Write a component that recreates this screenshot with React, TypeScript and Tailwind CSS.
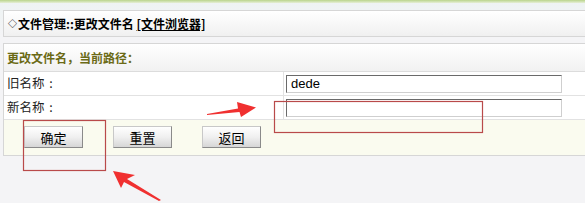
import React from 'react';

const cjk = { fontFamily: '"Noto Sans CJK SC", "Liberation Sans", sans-serif' };

const Btn: React.FC<{ label: string }> = ({ label }) => (
  <button
    type="button"
    className="h-[22px] w-[59px] border border-[#c8c8c8] border-r-[#8a8a8a] border-b-[#8a8a8a] bg-gradient-to-b from-white via-[#f0f0f0] to-[#d6d6d6] text-[13px] leading-none text-black"
  >
    {label}
  </button>
);

const Row: React.FC<{ label: string; value?: string }> = ({ label, value }) => (
  <div className="flex h-[24px] border-b border-[#e2e2e2] bg-white">
    <div className="flex w-[280px] items-center border-r border-[#e2e2e2] pl-[3px] text-[12.5px] text-[#222]">
      {label}
      <span className="inline-block w-[13px] text-center">:</span>
    </div>
    <div className="flex items-center pl-[2px]">
      <input
        readOnly
        defaultValue={value}
        className="h-[18px] w-[276px] border border-[#cfcfcf] border-t-[#6a6a6a] border-l-[#6a6a6a] bg-white px-[4px] text-[13px] text-black outline-none"
        style={{ fontFamily: '"Liberation Sans", sans-serif' }}
      />
    </div>
  </div>
);

export default function App() {
  return (
    <div className="relative h-[203px] w-[585px] overflow-hidden bg-[#f4f4f6]" style={cjk}>
      <div className="h-[3px] bg-gradient-to-b from-[#b9d48a] to-[#e6efd6]" />
      <div className="bg-gradient-to-b from-[#eef3f3] to-[#f4f4f6] pt-[7px] pl-[3px]">
        <div className="flex h-[27px] w-[640px] items-center border border-[#d6d6d6] bg-gradient-to-b from-white to-[#f0f0f0] pl-[4px] text-[12px] font-bold text-black">
          <span className="mr-[1px] text-[9px] font-normal">◇</span>
          文件管理::更改文件名&nbsp;
          <span className="underline">[文件浏览器]</span>
        </div>
      </div>
      <div className="mt-[6px] pl-[3px]">
        <div className="w-[640px] border border-[#d6d6d6] border-r-0">
          <div className="flex h-[28px] items-center border-b border-[#dcdcdc] bg-gradient-to-b from-white to-[#f1f1f1] pl-[3px] text-[12px] font-bold text-[#6b6a16]">
            更改文件名，当前路径：
          </div>
          <Row label="旧名称" value="dede" />
          <Row label="新名称" />
          <div className="flex h-[35px] items-start bg-[#fafbef] pt-[6px] pl-[20px]">
            <div className="flex gap-[30px]">
              <Btn label="确定" />
              <Btn label="重置" />
              <Btn label="返回" />
            </div>
          </div>
        </div>
      </div>
      <svg className="pointer-events-none absolute top-0 left-0" width="585" height="203" viewBox="0 0 585 203">
        <rect x="23.5" y="120.5" width="82" height="50" fill="none" stroke="#b94a4a" strokeWidth="1.2" />
        <rect x="274.5" y="101.5" width="208" height="31" fill="none" stroke="#b94a4a" strokeWidth="1.2" />
        <polygon points="207,114 238,108.5 237,102 256,107.5 241,117 239.5,112 207,115" fill="#f03030" />
        <polygon points="113,171 135,175 127,179 161,200 159,201 124,182 121,188" fill="#f03030" />
      </svg>
    </div>
  );
}
